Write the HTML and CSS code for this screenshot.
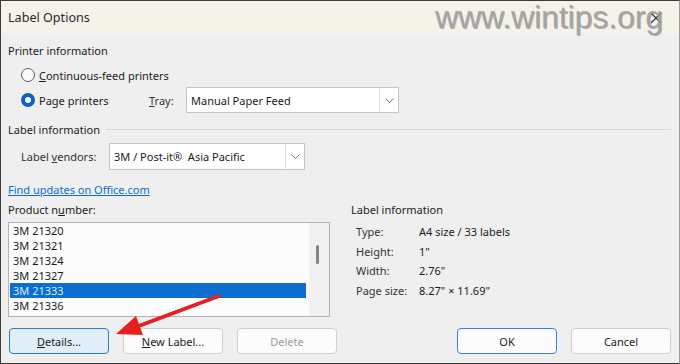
FILE: index.html
```html
<!DOCTYPE html>
<html lang="en">

<head>
    <meta charset="UTF-8">
    <title>Label Options</title>
    <link rel="stylesheet" href="styles.css">
</head>

<body>
    <div class="window">
        <div class="titlebar">
            <span class="title">Label Options</span>
            <svg class="close" width="12" height="12" viewBox="0 0 12 12">
                <path d="M1 1 L11 11 M11 1 L1 11" stroke="#333" stroke-width="1.2" fill="none" />
            </svg>
            <span class="watermark">www.wintips.org</span>
        </div>

        <div class="content">
            <div class="heading">Printer information</div>

            <div class="radio-row first">
                <span class="radio"></span>
                <span><u>C</u>ontinuous-feed printers</span>
            </div>
            <div class="radio-row second">
                <span class="radio checked"></span>
                <span class="page-label">Page printers</span>
                <span class="tray-label"><u>T</u>ray:</span>
                <div class="select tray-select">
                    <span class="select-text">Manual Paper Feed</span>
                    <span class="select-btn">
                        <svg width="9" height="5" viewBox="0 0 9 5"><path d="M0.5 0.5 L4.5 4.5 L8.5 0.5" stroke="#777" fill="none" /></svg>
                    </span>
                </div>
            </div>

            <div class="heading ruled">Label information</div>

            <div class="vendor-row">
                <span class="vendor-label">Label <u>v</u>endors:</span>
                <div class="select vendor-select">
                    <span class="select-text">3M / Post-it® &nbsp;Asia Pacific</span>
                    <span class="select-btn">
                        <svg width="9" height="5" viewBox="0 0 9 5"><path d="M0.5 0.5 L4.5 4.5 L8.5 0.5" stroke="#777" fill="none" /></svg>
                    </span>
                </div>
            </div>

            <div class="link-row"><a href="#">Find updates on Office.com</a></div>

            <div class="main">
                <div class="product">
                    <div class="caption">Product n<u>u</u>mber:</div>
                    <div class="listbox">
                        <div class="items">
                            <div class="item">3M 21320</div>
                            <div class="item">3M 21321</div>
                            <div class="item">3M 21324</div>
                            <div class="item">3M 21327</div>
                            <div class="item selected">3M 21333</div>
                            <div class="item">3M 21336</div>
                        </div>
                        <div class="scrollbar"><span class="thumb"></span></div>
                    </div>
                </div>
                <div class="info">
                    <div class="caption">Label information</div>
                    <div class="info-rows">
                        <div class="info-row"><span class="key">Type:</span><span>A4 size / 33 labels</span></div>
                        <div class="info-row"><span class="key">Height:</span><span>1"</span></div>
                        <div class="info-row"><span class="key">Width:</span><span>2.76"</span></div>
                        <div class="info-row"><span class="key">Page size:</span><span>8.27" × 11.69"</span></div>
                    </div>
                </div>
            </div>

            <div class="buttons">
                <button class="btn focused"><u>D</u>etails...</button>
                <button class="btn"><u>N</u>ew Label...</button>
                <button class="btn" disabled>Delete</button>
                <span class="spacer"></span>
                <button class="btn default">OK</button>
                <button class="btn">Cancel</button>
            </div>
        </div>

        <svg class="arrow" width="680" height="364" viewBox="0 0 680 364">
            <line x1="219" y1="296" x2="136" y2="327" stroke="#e5201e" stroke-width="4" stroke-linecap="round" />
            <polygon points="116,334 136,316 143,335" fill="#e5201e" />
        </svg>
    </div>
</body>

</html>
```

FILE: styles.css
```css
* {
    box-sizing: border-box;
}

body {
    margin: 0;
    font-family: "Noto Sans", "Open Sans", sans-serif;
    font-size: 11px;
    color: #1b1b1b;
}

.window {
    position: relative;
    width: 680px;
    height: 364px;
    background-color: #efefef;
    border: 1px solid #3a3a3a;
    border-right-color: #9a9a9a;
    overflow: hidden;
}

.titlebar {
    position: relative;
    height: 33px;
    background-color: #f5f2ea;
    display: flex;
    align-items: center;
    padding-left: 7px;
}

.title {
    font-size: 12.6px;
    color: #2a2a2a;
}

.close {
    position: absolute;
    top: 11px;
    left: 649px;
}

.watermark {
    position: absolute;
    top: -2px;
    left: 434px;
    font-family: "Liberation Sans", Arial, sans-serif;
    font-size: 32px;
    color: rgba(160, 160, 160, 0.85);
    text-shadow: 1px 1px 0 rgba(90, 90, 90, 0.45);
    letter-spacing: -0.1px;
}

.content {
    padding: 0 8px 0 7px;
    display: flex;
    flex-direction: column;
}

.heading {
    height: 16px;
    line-height: 16px;
    margin-top: 9px;
}

.heading.ruled {
    margin-top: 9px;
    display: flex;
    align-items: center;
    gap: 6px;
}

.heading.ruled::after {
    content: "";
    flex: 1;
    height: 1px;
    background-color: #d6d6d6;
    margin-top: -2px;
}

.radio-row {
    display: flex;
    align-items: center;
    padding-left: 13px;
}

.radio-row.first {
    height: 20px;
    margin-top: 6px;
}

.radio-row.second {
    height: 26px;
    margin-top: 2px;
}

.radio {
    width: 14px;
    height: 14px;
    border-radius: 50%;
    border: 1px solid #5c5c5c;
    background-color: #fbfbfb;
    margin-right: 4px;
    flex-shrink: 0;
}

.radio.checked {
    border: 4px solid #0f62b8;
    background-color: #fff;
}

.page-label {
    width: 110px;
}

.tray-label {
    width: 37px;
    color: #333;
}

.select {
    height: 26px;
    border: 1px solid #c4c4c4;
    background-color: #fff;
    display: flex;
    align-items: center;
}

.select-text {
    flex: 1;
    padding-left: 4px;
    white-space: nowrap;
}

.select-btn {
    width: 19px;
    height: 100%;
    border-left: 1px solid #e2e2e2;
    display: flex;
    align-items: center;
    justify-content: center;
}

.tray-select {
    width: 213px;
}

.vendor-row {
    height: 27px;
    margin-top: 5px;
    display: flex;
    align-items: center;
    padding-left: 13px;
}

.vendor-label {
    width: 88px;
    color: #333;
}

.vendor-select {
    width: 196px;
    height: 27px;
}

.link-row {
    height: 16px;
    line-height: 16px;
    margin-top: 12px;
}

.link-row a {
    color: #0a6ccf;
}

.main {
    display: flex;
    gap: 20px;
    height: 115px;
    margin-top: 4px;
}

.caption {
    height: 16px;
    line-height: 16px;
}

.product {
    width: 322px;
}

.listbox {
    margin-top: 4px;
    height: 95px;
    border: 1px solid #b3b3b3;
    background-color: #fcfcfc;
    display: flex;
}

.items {
    flex: 1;
    padding: 0 1px;
}

.item {
    height: 15px;
    line-height: 15px;
    padding-left: 3px;
}

.item.selected {
    background-color: #0a6fd0;
    color: #dbe9f7;
}

.scrollbar {
    width: 20px;
    background-color: #f1f1f1;
    margin: 0 0 0 2px;
    position: relative;
}

.thumb {
    position: absolute;
    top: 22px;
    left: 7px;
    width: 3px;
    height: 19px;
    border-radius: 2px;
    background-color: #858585;
}

.info {
    padding-left: 1px;
}

.info-rows {
    margin-top: 4px;
}

.info-row {
    display: flex;
    height: 19.7px;
    line-height: 19.7px;
    padding-left: 5px;
}

.key {
    width: 63px;
    color: #333;
}

.buttons {
    display: flex;
    gap: 14px;
    margin-top: 11px;
    padding-left: 1px;
}

.spacer {
    flex: 1;
}

.btn {
    width: 100px;
    height: 26px;
    font-family: inherit;
    font-size: 11px;
    color: #1b1b1b;
    background-color: #fcfcfc;
    border: 1px solid #cfcfcf;
    border-radius: 4px;
}

.btn.focused {
    background-color: #e1eef9;
    border-color: #2a7fd0;
}

.btn.default {
    border-color: #3783d4;
}

.btn:disabled {
    color: #9c9c9c;
}

.arrow {
    position: absolute;
    top: -1px;
    left: -1px;
    pointer-events: none;
}
```
